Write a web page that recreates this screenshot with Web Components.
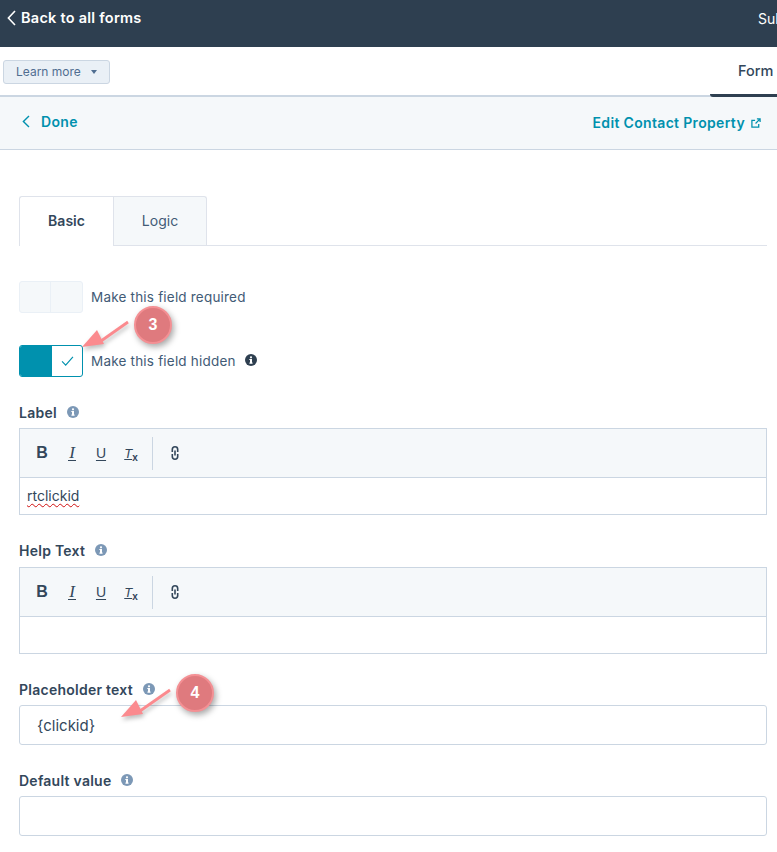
<!DOCTYPE html>
<html>
<head>
<meta charset="utf-8">
<title>Form field</title>
<style>
	html, body { margin: 0; padding: 0; }
	body {
		position:    relative;
		width:       777px;
		height:      852px;
		overflow:    hidden;
		background:  #fff;
		color:       #33475b;
		font-family: Inter, "Liberation Sans", sans-serif;
		font-size:   14px;
	}
</style>
</head>
<body>
	<top-bar></top-bar>
	<sub-bar></sub-bar>
	<done-bar></done-bar>
	<form-panel>
		<tab-strip></tab-strip>
		<toggle-row label="Make this field required"></toggle-row>
		<toggle-row label="Make this field hidden" on info style="margin-bottom:25px"></toggle-row>
		<editor-field label="Label" value="rtclickid"></editor-field>
		<editor-field label="Help Text" style="margin-top:25px;--box-gap:7px"></editor-field>
		<text-field label="Placeholder text" value="{clickid}" style="margin-top:25px"></text-field>
		<text-field label="Default value" style="margin-top:25px"></text-field>
	</form-panel>
	<call-out number="3" style="left:134px;top:306px" tip="-52,41"></call-out>
	<call-out number="4" style="left:176px;top:674px" tip="-55,43"></call-out>

<script>
(function ()
{
	const INFO_ICON =
	`<svg class="info-icon" viewBox="0 0 12 12" width="12" height="12"><circle cx="6" cy="6" r="6" fill="currentColor"/><rect x="5" y="5" width="2" height="4.4" fill="#fff"/><rect x="4.3" y="5" width="2" height="1" fill="#fff"/><rect x="4.3" y="8.6" width="3.4" height="1" fill="#fff"/><circle cx="6" cy="3.3" r="1.1" fill="#fff"/></svg>`;

	function define( name, markup )
	{
		customElements.define( name, class extends HTMLElement
		{
			constructor()
			{
				super();

				let shadow = this.attachShadow({ mode: 'open' });

				shadow.innerHTML = markup( this );
			}
		});
	}

	define( 'top-bar', () =>
	`
	<style>
		:host {
			display:         flex;
			justify-content: space-between;
			align-items:     flex-start;
			height:          47px;
			background:      #2e3f50;
			color:           #fff;
			overflow:        hidden;
		}
		.back {
			display:     flex;
			align-items: center;
			gap:         5px;
			padding:     8px 0 0 7px;
			font-size:   14.5px;
			font-weight: 600;
			line-height: 20px;
			letter-spacing: .25px;
		}
		.submit {
			padding:     9px 0 0 0;
			width:       19px;
			font-size:   14px;
			font-weight: 400;
			line-height: 20px;
			white-space: nowrap;
			overflow:    hidden;
		}
		svg { fill: none; stroke: #fff; stroke-width: 1.6; }
	</style>
	<div class="back">
		<svg viewBox="0 0 9 16" width="9" height="16"><path d="M8 1 1.4 8 8 15"/></svg>
		<span>Back to all forms</span>
	</div>
	<div class="submit">Submissions</div>
	`);

	define( 'sub-bar', () =>
	`
	<style>
		:host {
			display:         flex;
			justify-content: space-between;
			align-items:     center;
			height:          50px;
			box-sizing:      border-box;
			border-bottom:   2px solid #cbd6e2;
			background:      #fff;
		}
		.learn {
			display:       flex;
			align-items:   center;
			gap:           10px;
			box-sizing:    border-box;
			width:         107px;
			height:        24px;
			margin:        1px 0 0 3px;
			padding-left:  12px;
			background:    #eaf0f6;
			border:        1px solid #cbd6e2;
			border-radius: 3px;
			color:         #506e91;
			font-size:     12px;
		}
		.caret { width: 0; height: 0; border: 3.5px solid transparent; border-top: 4px solid #506e91; border-bottom: 0; }
		.form {
			box-sizing:  border-box;
			align-self:  flex-end;
			position:    relative;
			top:         2px;
			width:       67px;
			height:      50px;
			padding:     14px 0 0 28px;
			border-bottom: 3px solid #2e3f50;
			border-bottom-left-radius: 3px;
			font-size:   14.5px;
			font-weight: 500;
			line-height: 20px;
			white-space: nowrap;
		}
	</style>
	<div class="learn"><span>Learn more</span><i class="caret"></i></div>
	<div class="form">Form</div>
	`);

	define( 'done-bar', () =>
	`
	<style>
		:host {
			display:         flex;
			justify-content: space-between;
			align-items:     center;
			height:          53px;
			box-sizing:      border-box;
			padding:         0 16px 0 22px;
			background:      #f5f8fa;
			border-bottom:   1px solid #cbd6e2;
			color:           #0091ae;
			font-weight:     600;
			font-size:       14px;
			letter-spacing:  .33px;
		}
		div { display: flex; align-items: center; }
		.done { gap: 11px; margin-top: -3px; }
		.edit { gap: 6px; margin-top: -1px; }
		svg { fill: none; stroke: #0091ae; stroke-width: 1.4; }
	</style>
	<div class="done">
		<svg viewBox="0 0 8 13" width="8" height="13"><path d="M7 1 1.4 6.5 7 12"/></svg>
		<span>Done</span>
	</div>
	<div class="edit">
		<span>Edit Contact Property</span>
		<svg viewBox="0 0 11 11" width="10" height="10" stroke-width="1"><path d="M8.5 6.5V10H1V2.5h3.5M6.5 1H10V4.5M10 1 5 6"/></svg>
	</div>
	`);

	define( 'form-panel', () =>
	`
	<style>
		:host {
			display: block;
			padding: 46px 10px 0 19px;
		}
	</style>
	<slot></slot>
	`);

	define( 'tab-strip', () =>
	`
	<style>
		:host {
			display:       flex;
			height:        50px;
			box-sizing:    border-box;
			border-bottom: 1px solid #dfe3eb;
			margin-bottom: 35px;
		}
		div {
			box-sizing:  border-box;
			height:      50px;
			display:     flex;
			align-items: center;
			justify-content: center;
			border:      1px solid #dfe3eb;
			padding-bottom: 1px;
		}
		.basic {
			width:         94px;
			background:    #fff;
			border-right:  0;
			border-bottom: 0;
			border-radius: 3px 0 0 0;
			font-weight:   600;
			padding-bottom: 2px;
		}
		.logic {
			width:         94px;
			height:        49px;
			background:    #f5f8fa;
			border-bottom: 0;
			border-radius: 0 3px 0 0;
			color:         #425b76;
		}
	</style>
	<div class="basic">Basic</div>
	<div class="logic">Logic</div>
	`);

	define( 'toggle-row', ( el ) =>
	`
	<style>
		:host {
			display:       flex;
			align-items:   center;
			gap:           8px;
			height:        32px;
			margin-bottom: 32px;
		}
		.toggle {
			display:       flex;
			box-sizing:    border-box;
			width:         64px;
			height:        32px;
			border:        1px solid #eaf0f6;
			border-radius: 3px;
			background:    #f5f8fa;
			overflow:      hidden;
		}
		.toggle i { flex: 1; border-left: 1px solid #eaf0f6; }
		.toggle i:first-child { flex: 0 0 30px; border: 0; }
		.toggle.on { border-color: #0091ae; background: #fff; }
		.toggle.on i:first-child { flex: 0 0 32px; background: #0091ae; }
		.toggle.on i:last-child { border: 0; display: flex; align-items: center; justify-content: center; }
		.info { display: flex; color: #2e3f50; margin: -2px 0 0 1px; }
		span { font-size: 13.5px; letter-spacing: .2px; color: #425b76; }
		svg.tick { fill: none; stroke: #0091ae; stroke-width: 1.3; }
	</style>
	<div class="toggle ${ el.hasAttribute( 'on' ) ? 'on' : '' }">
		<i></i>
		<i>${ el.hasAttribute( 'on' ) ? '<svg class="tick" viewBox="0 0 14 11" width="13" height="10"><path d="M1 6 5 10 13 1"/></svg>' : '' }</i>
	</div>
	<span>${ el.getAttribute( 'label' ) }</span>
	${ el.hasAttribute( 'info' ) ? `<div class="info">${ INFO_ICON }</div>` : '' }
	`);

	const FIELD_LABEL_STYLES =
	`
		.label {
			display:     flex;
			align-items: center;
			gap:         10px;
			height:      20px;
			font-weight: 600;
			font-size:   14px;
			letter-spacing: .25px;
			color:       #33475b;
		}
		.label div { display: flex; color: #7c98b6; }
	`;

	define( 'editor-field', ( el ) =>
	`
	<style>
		:host { display: block; }
		${ FIELD_LABEL_STYLES }
		.box {
			margin-top: var( --box-gap, 6px );
			border:     1px solid #cbd6e2;
		}
		.tools {
			display:       flex;
			align-items:   center;
			height:        48px;
			background:    #f5f8fa;
			border-bottom: 1px solid #cbd6e2;
			padding-left:  15px;
			color:         #33475b;
		}
		.tools b {
			display:         flex;
			justify-content: center;
			align-items:     baseline;
			width:           14px;
			margin-right:    16px;
			font-family:     "Liberation Sans", sans-serif;
			font-size:       16px;
			font-weight:     700;
		}
		.tools b.thin { font-weight: 400; font-size: 14px; }
		.tools b.i { font-family: "Liberation Serif", serif; font-style: italic; font-size: 17px; border-bottom: 1px solid #33475b; width: 8px; margin: 0 18px 0 3px; line-height: 15px; }
		.tools b.u { text-decoration: underline; text-underline-offset: 2px; }
		.tools b.x { font-size: 13px; font-style: italic; margin-right: 13px; }
		.tools b.x span { text-decoration: underline; text-underline-offset: 1px; }
		.tools b.x small { font-size: 10px; font-style: normal; position: relative; top: 3px; font-weight: 700; }
		.sep { width: 1px; height: 33px; background: #cbd6e2; margin: 0 18px 0 1px; }
		.text {
			height:      36px;
			box-sizing:  border-box;
			padding:     8px 7px 0;
			font-size:   14px;
			line-height: 20px;
			color:       #33475b;
		}
		.text span {
			text-decoration: underline wavy #d01010 1px;
			text-underline-offset: 2px;
		}
		svg.chain { fill: none; stroke: #33475b; stroke-width: 1.6; }
	</style>
	<div class="label">${ el.getAttribute( 'label' ) }<div>${ INFO_ICON }</div></div>
	<div class="box">
		<div class="tools">
			<b>B</b>
			<b class="thin i">I</b>
			<b class="thin u">U</b>
			<b class="thin x"><span>T</span><small>x</small></b>
			<i class="sep"></i>
			<svg class="chain" viewBox="0 0 8 14" width="8" height="14"><path d="M1.3 6V3.5a2.7 2.7 0 0 1 5.4 0V6M1.3 8v2.5a2.7 2.7 0 0 0 5.4 0V8M4 4.5v5"/></svg>
		</div>
		<div class="text"><span>${ el.getAttribute( 'value' ) || '' }</span></div>
	</div>
	`);

	define( 'text-field', ( el ) =>
	`
	<style>
		:host { display: block; }
		${ FIELD_LABEL_STYLES }
		.input {
			box-sizing:    border-box;
			height:        40px;
			margin-top:    6px;
			padding:       1px 17px 0;
			display:       flex;
			align-items:   center;
			border:        1px solid #cbd6e2;
			border-radius: 3px;
			font-size:     15px;
			color:         #33475b;
		}
	</style>
	<div class="label">${ el.getAttribute( 'label' ) }<div>${ INFO_ICON }</div></div>
	<div class="input">${ el.getAttribute( 'value' ) || '' }</div>
	`);

	define( 'call-out', ( el ) =>
	{
		const [ x, y ] = el.getAttribute( 'tip' ).split( ',' ).map( Number );

		return `
		<style>
			:host {
				position: absolute;
				display:  block;
				width:    38px;
				height:   38px;
			}
			.dot {
				box-sizing:    border-box;
				width:         38px;
				height:        38px;
				border-radius: 50%;
				background:    #df7a7e;
				border:        2px solid #f49094;
				box-shadow:    2px 3px 6px rgba(0,0,0,.35);
				color:         #fff;
				display:       flex;
				align-items:   center;
				justify-content: center;
				font-family:   "Liberation Sans", sans-serif;
				font-weight:   700;
				font-size:     16px;
			}
			svg { position: absolute; left: -80px; top: -20px; overflow: visible; }
		</style>
		<svg width="120" height="120">
			<g transform="translate(80,20)" style="filter:drop-shadow(1px 3px 2px rgba(0,0,0,.25))">
				<path d="M-6 16 ${ x + 19 } ${ y - 6 }" stroke="#fb8a8e" stroke-width="2.8" fill="none"/>
				<path d="M${ x } ${ y } ${ x + 15 } ${ y - 17 } ${ x + 22 } ${ y - 3 }Z" fill="#fb8a8e"/>
			</g>
		</svg>
		<div class="dot">${ el.getAttribute( 'number' ) }</div>
		`;
	});
})();
</script>
</body>
</html>
